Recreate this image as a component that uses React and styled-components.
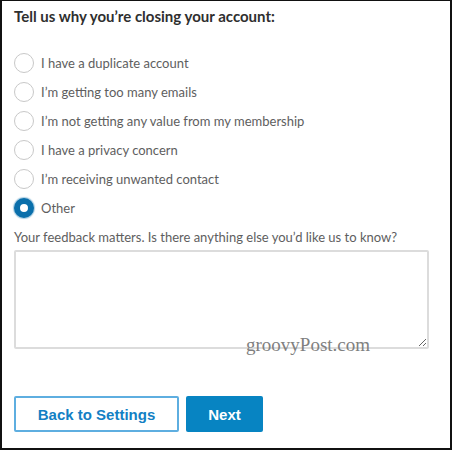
import React, { useState } from 'react';
import styled, { createGlobalStyle } from 'styled-components';

const GlobalStyle = createGlobalStyle`
  html, body {
    margin: 0;
    padding: 0;
    background: #fff;
  }
`;

const Frame = styled.div`
  box-sizing: border-box;
  width: 452px;
  height: 450px;
  border: 2px solid #111;
  border-top-width: 1px;
  padding: 0 0 0 12px;
  font-family: Lato, "Liberation Sans", sans-serif;
  background: #fff;
`;

const Title = styled.h1`
  margin: 0;
  padding-top: 5px;
  font-size: 15px;
  line-height: 20px;
  font-weight: 700;
  color: #2f2f2f;
`;

const Options = styled.div`
  display: flex;
  flex-direction: column;
  margin-top: 22px;
`;

const Row = styled.label`
  display: flex;
  align-items: center;
  gap: 7px;
  height: 29px;
  font-size: 13px;
  color: #5e5e5e;
  cursor: pointer;
`;

const Circle = styled.span`
  box-sizing: border-box;
  width: 20px;
  height: 20px;
  border-radius: 50%;
  flex-shrink: 0;
  border: ${(p) => (p.$on ? '6px solid #0a6fab' : '1px solid #c8c8c8')};
  background: #fff;
  box-shadow: ${(p) => (p.$on ? '0 0 1px 1px rgba(10,111,171,0.35)' : 'none')};
`;

const Label = styled.div`
  margin-top: 6px;
  font-size: 13px;
  line-height: 18px;
  color: #5e5e5e;
`;

const FieldWrap = styled.div`
  position: relative;
  margin-top: 4px;
  width: 415px;
`;

const TextArea = styled.textarea`
  display: block;
  box-sizing: border-box;
  width: 415px;
  height: 99px;
  border: 2px solid #dcdcdc;
  border-radius: 2px;
  resize: vertical;
  font-family: inherit;
  outline: none;
`;

const Watermark = styled.span`
  position: absolute;
  left: 231px;
  top: 84px;
  padding: 0 1px;
  font-family: "Liberation Serif", serif;
  font-size: 19px;
  color: #808080;
`;

const Buttons = styled.div`
  display: flex;
  gap: 7px;
  margin-top: 47px;
`;

const Button = styled.button`
  box-sizing: border-box;
  height: 36px;
  padding: 0;
  border-radius: 2px;
  font-family: "Liberation Sans", Arial, sans-serif;
  font-size: 15px;
  font-weight: 700;
  cursor: pointer;
`;

const BackButton = styled(Button)`
  width: 165px;
  background: #fff;
  color: #1380c4;
  border: 2px solid #5eaee0;
`;

const NextButton = styled(Button)`
  width: 77px;
  background: #0784c2;
  color: #fff;
  border: none;
`;

const reasons = [
  'I have a duplicate account',
  'I’m getting too many emails',
  'I’m not getting any value from my membership',
  'I have a privacy concern',
  'I’m receiving unwanted contact',
  'Other',
];

export default function App() {
  const [picked, setPicked] = useState(5);

  return (
    <>
      <GlobalStyle />
      <Frame>
        <Title>Tell us why you’re closing your account:</Title>
        <Options>
          {reasons.map((r, i) => (
            <Row key={r} onClick={() => setPicked(i)}>
              <Circle $on={picked === i} />
              {r}
            </Row>
          ))}
        </Options>
        <Label>Your feedback matters. Is there anything else you’d like us to know?</Label>
        <FieldWrap>
          <TextArea />
          <Watermark>groovyPost.com</Watermark>
        </FieldWrap>
        <Buttons>
          <BackButton>Back to Settings</BackButton>
          <NextButton>Next</NextButton>
        </Buttons>
      </Frame>
    </>
  );
}
